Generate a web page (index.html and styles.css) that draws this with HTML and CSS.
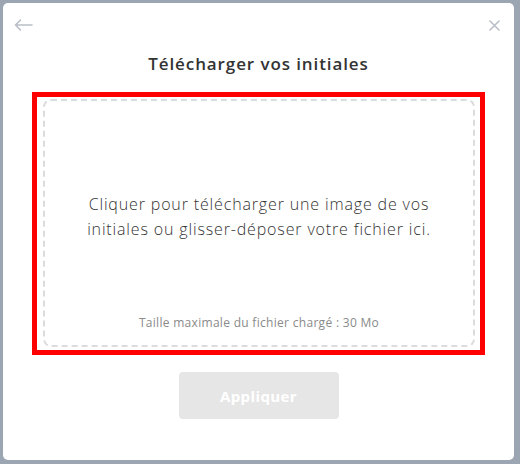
FILE: index.html
```html
<!DOCTYPE html>
<html lang="fr">
<head>
<meta charset="utf-8">
<title>Télécharger vos initiales</title>
<link rel="stylesheet" href="styles.css">
</head>
<body>
<div class="modal">
  <div class="header">
    <button class="icon-btn" aria-label="Retour">
      <svg width="19" height="12" viewBox="0 0 19 12" fill="none" stroke="#b9bec8" stroke-width="1.6" stroke-linecap="round" stroke-linejoin="round"><path d="M18 6H1.5M6.5 1L1.5 6l5 5"/></svg>
    </button>
    <button class="icon-btn" aria-label="Fermer">
      <svg width="11" height="11" viewBox="0 0 11 11" fill="none" stroke="#b9bec8" stroke-width="1.6" stroke-linecap="round"><path d="M1 1l9 9M10 1l-9 9"/></svg>
    </button>
  </div>
  <h1 class="title">Télécharger vos initiales</h1>
  <div class="highlight">
    <div class="dropzone">
      <p class="drop-text">Cliquer pour télécharger une image de vos<br>initiales ou glisser-déposer votre fichier ici.</p>
      <p class="drop-hint">Taille maximale du fichier chargé : 30 Mo</p>
    </div>
  </div>
  <div class="actions">
    <button class="apply" disabled>Appliquer</button>
  </div>
</div>
</body>
</html>
```
FILE: styles.css
```css
html, body {
  margin: 0;
  padding: 0;
}
body {
  background: #9ba6b2;
  font-family: "Open Sans", "Noto Sans", sans-serif;
  width: 520px;
  height: 464px;
  overflow: hidden;
}
.modal {
  margin: 3px 6px 4px 3px;
  width: 511px;
  height: 457px;
  background: #fff;
  border-radius: 5px;
  display: flex;
  flex-direction: column;
}
.header {
  height: 44px;
  display: flex;
  justify-content: space-between;
  align-items: center;
  padding: 0 14px 0 11px;
}
.icon-btn {
  background: none;
  border: 0;
  padding: 0;
  display: flex;
  cursor: pointer;
}
.title {
  margin: 5px 0 0;
  font-size: 17px;
  line-height: 24px;
  letter-spacing: 0.9px;
  font-weight: 600;
  color: #333;
  text-align: center;
}
.highlight {
  margin: 16px 29px 0 29px;
  border: 5px solid #ff0000;
  padding: 2px 5px 3px 6px;
}
.dropzone {
  height: 244px;
  border: 2px dashed #dcdcde;
  border-radius: 8px;
  text-align: center;
  display: flex;
  flex-direction: column;
  align-items: center;
}
.drop-text {
  margin: 91px 0 0;
  font-size: 16px;
  line-height: 25px;
  letter-spacing: 0.85px;
  font-weight: 300;
  color: #333;
}
.drop-hint {
  margin: 73px 0 0;
  font-size: 12px;
  line-height: 16px;
  letter-spacing: 0.3px;
  color: #8a8a8a;
}
.actions {
  display: flex;
  justify-content: center;
  margin-top: 17px;
}
.apply {
  width: 160px;
  height: 47px;
  border: 0;
  border-radius: 4px;
  background: #e6e6e6;
  color: #fff;
  font-family: inherit;
  font-size: 15px;
  letter-spacing: 0.4px;
  font-weight: 700;
}
```
